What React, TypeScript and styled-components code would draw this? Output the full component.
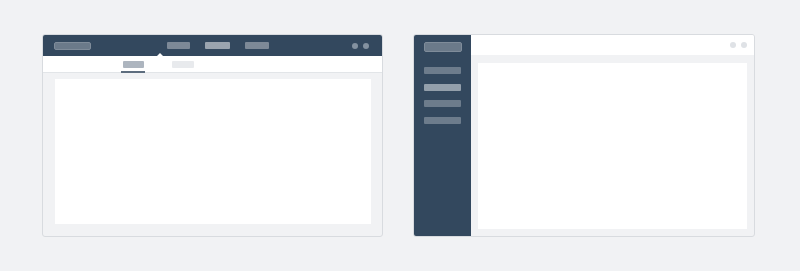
import React from "react";
import styled, { createGlobalStyle } from "styled-components";

const Global = createGlobalStyle`
  html, body { margin: 0; padding: 0; background: #f1f2f4; font-family: "Liberation Sans", Arial, sans-serif; }
`;

const DARK = "#33485e";

const Page = styled.div`
  display: flex;
  gap: 30px;
  padding: 34px 0 0 42px;
`;

const Window = styled.div<{ $w: number }>`
  width: ${(p) => p.$w}px;
  height: 203px;
  box-sizing: border-box;
  border: 1px solid #d8dbdf;
  border-radius: 3px;
  overflow: hidden;
  background: #f1f2f4;
  display: flex;
  flex-direction: column;
`;

const TopBar = styled.div`
  position: relative;
  height: 21px;
  flex: none;
  background: ${DARK};
  display: flex;
  align-items: center;
  padding: 0 13px 0 11px;
`;

const Logo = styled.div<{ $w?: number; $h?: number }>`
  width: ${(p) => p.$w ?? 37}px;
  height: ${(p) => p.$h ?? 8}px;
  background: #6b7a8a;
  border: 1px solid #7f8c9a;
  box-sizing: border-box;
  border-radius: 2px;
`;

const Nav = styled.div`
  display: flex;
  gap: 15px;
  margin-left: 76px;
`;

const Bar = styled.div<{ $w: number; $c: string; $h?: number }>`
  width: ${(p) => p.$w}px;
  height: ${(p) => p.$h ?? 7}px;
  background: ${(p) => p.$c};
  border-radius: 1px;
`;

const Dots = styled.div`
  margin-left: auto;
  display: flex;
  gap: 5px;
`;

const Dot = styled.div<{ $c: string }>`
  width: 6px;
  height: 6px;
  border-radius: 50%;
  background: ${(p) => p.$c};
`;

const Caret = styled.div`
  position: absolute;
  left: 114px;
  bottom: 0;
  width: 0;
  height: 0;
  border-left: 3px solid transparent;
  border-right: 3px solid transparent;
  border-bottom: 3px solid #ffffff;
`;

const SubNav = styled.div`
  height: 17px;
  flex: none;
  background: #ffffff;
  border-bottom: 1px solid #e2e5e8;
  display: flex;
  gap: 26px;
  padding-left: 78px;
  box-sizing: border-box;
`;

const Tab = styled.div<{ $active?: boolean }>`
  width: 24px;
  display: flex;
  flex-direction: column;
  align-items: center;
  padding-top: 5px;
  box-sizing: border-box;
  border-bottom: 2px solid ${(p) => (p.$active ? "#5d6d7e" : "transparent")};
  height: 17px;
`;

const Body = styled.div<{ $pad: string }>`
  flex: 1;
  padding: ${(p) => p.$pad};
  display: flex;
`;

const Card = styled.div`
  flex: 1;
  background: #ffffff;
`;

const Split = styled.div`
  display: flex;
  flex: 1;
`;

const Sidebar = styled.div`
  width: 57px;
  flex: none;
  background: ${DARK};
  display: flex;
  flex-direction: column;
  align-items: center;
  padding-top: 7px;
  box-sizing: border-box;
`;

const Menu = styled.div`
  display: flex;
  flex-direction: column;
  gap: 9.5px;
  margin-top: 15px;
`;

const Main = styled.div`
  flex: 1;
  display: flex;
  flex-direction: column;
`;

const MainTop = styled.div`
  height: 20px;
  flex: none;
  background: #ffffff;
  display: flex;
  align-items: center;
  padding-right: 7px;
`;

export default function App() {
  return (
    <>
      <Global />
      <Page>
        <Window $w={341}>
          <TopBar>
            <Logo />
            <Nav>
              <Bar $w={23} $c="#7d8997" />
              <Bar $w={25} $c="#9aa4af" />
              <Bar $w={24} $c="#7d8997" />
            </Nav>
            <Dots>
              <Dot $c="#8391a0" />
              <Dot $c="#8391a0" />
            </Dots>
            <Caret />
          </TopBar>
          <SubNav>
            <Tab $active>
              <Bar $w={21} $c="#adb5bf" />
            </Tab>
            <Tab>
              <Bar $w={22} $c="#e8eaed" />
            </Tab>
          </SubNav>
          <Body $pad="6px 11px 12px 12px">
            <Card />
          </Body>
        </Window>
        <Window $w={342}>
          <Split>
            <Sidebar>
              <Logo $w={38} $h={10} />
              <Menu>
                <Bar $w={37} $c="#6d7c8c" />
                <Bar $w={37} $c="#939fab" />
                <Bar $w={37} $c="#6d7c8c" />
                <Bar $w={37} $c="#6d7c8c" />
              </Menu>
            </Sidebar>
            <Main>
              <MainTop>
                <Dots>
                  <Dot $c="#dfe2e6" />
                  <Dot $c="#dfe2e6" />
                </Dots>
              </MainTop>
              <Body $pad="8px 7px 7px 7px">
                <Card />
              </Body>
            </Main>
          </Split>
        </Window>
      </Page>
    </>
  );
}
